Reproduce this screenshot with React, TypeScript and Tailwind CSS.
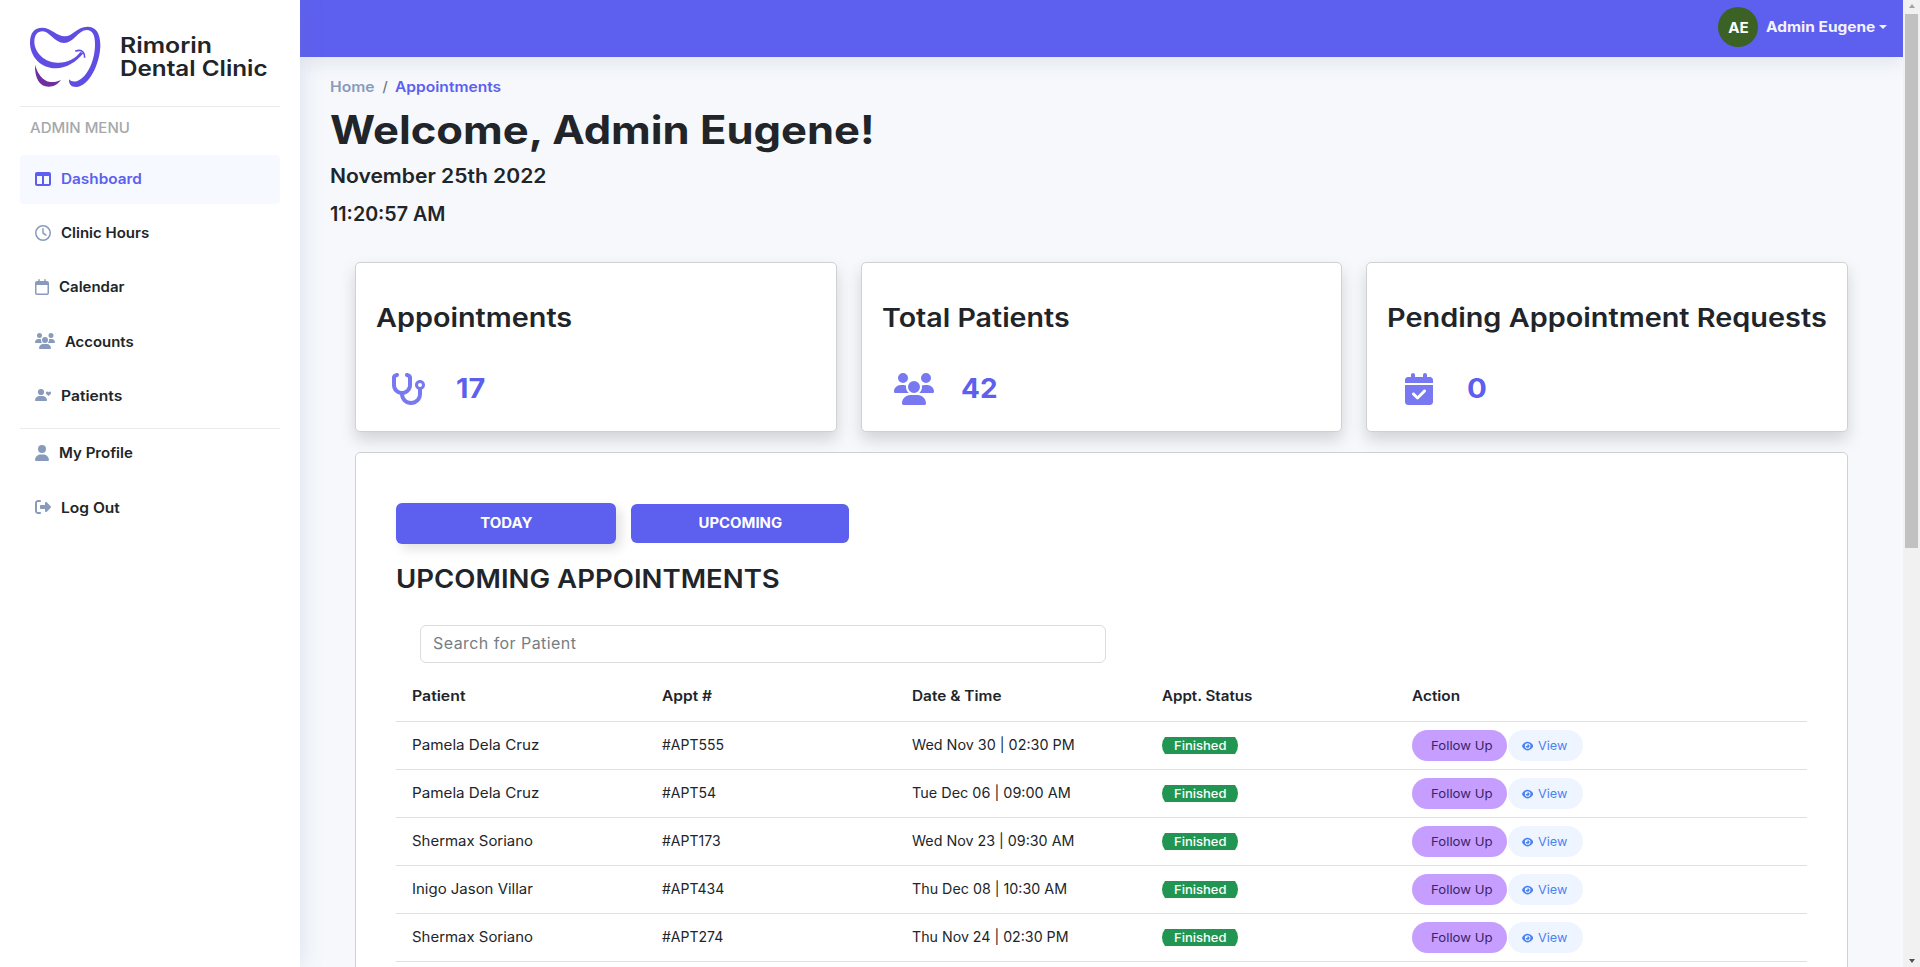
import type { ReactNode } from "react";
import {
  FaCalendarCheck,
  FaEye,
  FaRegCalendar,
  FaRegClock,
  FaRightFromBracket,
  FaStethoscope,
  FaTableColumns,
  FaUser,
  FaUsers,
} from "react-icons/fa6";

/* Single-line text with slightly widened letterforms. */
function Wide({ w, children }: { w: string; children: ReactNode }) {
  return <span className={`inline-block origin-left whitespace-nowrap ${w}`}>{children}</span>;
}

function ToothLogo() {
  return (
    <svg viewBox="0 0 300 252" className="h-[84px] w-[100px] shrink-0">
      <path
        fill="#604ee2"
        d="M190 112C170 137 140 157 108 157C60 156 30 120 30 80C30 50 44 35 66 35C92 35 112 61 134 61C158 61 172 32 202 32C228 32 241 52 241 88C241 140 208 213 168 213C154 213 146 206 147 190C153 197 162 198 172 195C205 182 225 130 225 85C225 58 218 42 200 42C176 42 160 81 132 81C104 81 88 46 68 46C52 46 43 58 43 78C44 112 76 140 112 140C142 141 166 128 181 108Z"
      />
      <path d="M166 106Q181 99 189 108Q194 114 194 125" fill="none" stroke="#604ee2" strokeWidth="5" />
      <path
        fill="#702da0"
        d="M45 146C52 170 66 195 92 198C104 199 114 196 123 192C113 205 102 212 86 212C58 212 44 185 45 146Z"
      />
    </svg>
  );
}

function UserHeart() {
  return (
    <svg viewBox="0 0 16 16" fill="currentColor" className="h-4 w-4">
      <circle cx="6" cy="5" r="3.1" />
      <path d="M4.600 9h2.800C10 9 12 10.900 12 13.300c0 .4-.3.7-.7.7H.7c-.4 0-.7-.3-.7-.7C0 10.900 2 9 4.600 9Z" />
      <path d="M13.500 9.100L11.300 6.900C10.500 5.900 11.100 4.500 12.200 4.500c.6 0 1 .3 1.300.8.300-.5.700-.8 1.300-.8C15.900 4.500 16.500 5.900 15.700 6.900Z" />
    </svg>
  );
}

function NavItem({ icon, label, w, active = false }: { icon: ReactNode; label: string; w: string; active?: boolean }) {
  return (
    <a
      className={`mb-[5.200px] flex h-[49px] items-center gap-[10px] rounded px-[15px] pb-[2px] text-[14px] font-semibold ${
        active ? "bg-[#f6f9ff] text-[#5d5fef]" : "text-[#212529]"
      }`}
    >
      <span className={active ? "text-[#5d5fef]" : "text-[#899bbd]"}>{icon}</span>
      <Wide w={w}>{label}</Wide>
    </a>
  );
}

function Sidebar() {
  return (
    <aside className="relative z-10 h-full w-[300px] shrink-0 bg-white px-5 shadow-[0_0_22px_rgba(110,130,165,0.210)]">
      <div className="flex h-[106px] items-center">
        <div className="mt-[10px]">
          <ToothLogo />
        </div>
        <div className="mt-2 text-[21.500px] leading-[23px] font-semibold text-[#212529]">
          <div>
            <Wide w="scale-x-[1.155]">Rimorin</Wide>
          </div>
          <div>
            <Wide w="scale-x-[1.127]">Dental Clinic</Wide>
          </div>
        </div>
      </div>
      <div className="h-px bg-[#ebebec]" />
      <div className="flex h-[41px] items-center px-[10px] pb-px text-[14px] font-medium text-[#a5a8ab]">
        <Wide w="scale-x-[1.073]">ADMIN MENU</Wide>
      </div>
      <nav className="mt-[7px]">
        <NavItem active label="Dashboard" w="scale-x-[1.095]" icon={<FaTableColumns className="h-4 w-4" />} />
        <NavItem label="Clinic Hours" w="scale-x-[1.071]" icon={<FaRegClock className="h-4 w-4" />} />
        <NavItem label="Calendar" w="scale-x-[1.071]" icon={<FaRegCalendar className="h-4 w-3.5" />} />
        <NavItem label="Accounts" w="scale-x-[1.065]" icon={<FaUsers className="h-4 w-5" />} />
        <NavItem label="Patients" w="scale-x-[1.115]" icon={<UserHeart />} />
      </nav>
      <div className="mt-[6.800px] h-px bg-[#ebebec]" />
      <nav className="pt-[0.800px]">
        <NavItem label="My Profile" w="scale-x-[1.075]" icon={<FaUser className="h-4 w-3.5" />} />
        <NavItem label="Log Out" w="scale-x-[1.110]" icon={<FaRightFromBracket className="h-4 w-4" />} />
      </nav>
    </aside>
  );
}

function TopBar() {
  return (
    <header className="flex h-[57px] shrink-0 justify-end bg-[#5d5fef] pt-[7px] pr-4 text-white shadow-[0_8px_16px_rgba(136,152,170,0.150)]">
      <div className="flex h-10 items-center">
        <div className="flex h-10 w-10 items-center justify-center rounded-full bg-[#3c6124] text-[14px] font-bold">
          <span className="scale-x-[1.080]">AE</span>
        </div>
        <span className="ml-[7.500px] w-[113.500px] pb-px text-[14px] font-bold text-[#f3f3ff]">
          <Wide w="scale-x-[1.104]">Admin Eugene</Wide>
        </span>
        <span className="mb-px h-0 w-0 border-x-4 border-t-4 border-x-transparent border-t-[#f3f3ff]" />
      </div>
    </header>
  );
}

function StatCard({ title, titleW, body, bodyClass }: { title: string; titleW: string; body: ReactNode; bodyClass: string }) {
  return (
    <section className="h-[170px] min-w-0 flex-1 rounded-[5px] border border-[#d0d1d4] bg-white shadow-[0_8px_16px_rgba(0,0,0,0.150)]">
      <h2 className="mt-[35px] pl-5 text-[26px] leading-10 font-semibold text-[#212529]">
        <Wide w={titleW}>{title}</Wide>
      </h2>
      <div className={`mt-[31px] flex h-10 items-center text-[27px] font-bold text-[#5d5fef] ${bodyClass}`}>{body}</div>
    </section>
  );
}

type Row = { patient: string; nameW: string; appt: string; time: string; timeW: string };

const rows: Row[] = [
  { patient: "Pamela Dela Cruz", nameW: "scale-x-[1.085]", appt: "#APT555", time: "Wed Nov 30 | 02:30 PM", timeW: "scale-x-[1.025]" },
  { patient: "Pamela Dela Cruz", nameW: "scale-x-[1.085]", appt: "#APT54", time: "Tue Dec 06 | 09:00 AM", timeW: "scale-x-[1.030]" },
  { patient: "Shermax Soriano", nameW: "scale-x-[1.067]", appt: "#APT173", time: "Wed Nov 23 | 09:30 AM", timeW: "scale-x-[1.020]" },
  { patient: "Inigo Jason Villar", nameW: "scale-x-[1.068]", appt: "#APT434", time: "Thu Dec 08 | 10:30 AM", timeW: "scale-x-[1.020]" },
  { patient: "Shermax Soriano", nameW: "scale-x-[1.067]", appt: "#APT274", time: "Thu Nov 24 | 02:30 PM", timeW: "scale-x-[1.014]" },
];

function StatusBadge() {
  return (
    <span className="flex h-[17px] w-[76px] items-center overflow-hidden">
      <span className="flex h-[27px] w-full shrink-0 items-center justify-center rounded-full bg-[#219653] text-[12px] font-medium text-white">
        <span className="scale-x-[1.080]">Finished</span>
      </span>
    </span>
  );
}

function TableRow({ row }: { row: Row }) {
  return (
    <div className="grid h-12 grid-cols-[250px_250px_250px_250px_1fr] items-center border-b border-[#dee0e2] pl-4 text-[14px] text-[#212529]">
      <span className="pb-[2px]">
        <Wide w={row.nameW}>{row.patient}</Wide>
      </span>
      <span className="pb-[2px]">{row.appt}</span>
      <span className="pb-[2px]">
        <Wide w={row.timeW}>{row.time}</Wide>
      </span>
      <StatusBadge />
      <div className="flex items-center text-[12px]">
        <button className="flex h-[31px] w-[95px] items-center rounded-full bg-[#c69eff] pl-[19px] text-[#3b2466]">
          <Wide w="scale-x-[1.100]">Follow Up</Wide>
        </button>
        <button className="ml-[0.500px] flex h-[31px] w-[75.500px] items-center gap-[4.500px] rounded-full bg-[#eff5ff] pl-[14.500px] text-[#4a82f3]">
          <FaEye className="h-[10px] w-[11.250px]" />
          <Wide w="scale-x-[1.054]">View</Wide>
        </button>
      </div>
    </div>
  );
}

function AppointmentsPanel() {
  return (
    <section className="mt-5 h-[700px] rounded-[5px] border border-[#d0d1d4] bg-white px-10 pt-[50px]">
      <div className="flex h-[41px] items-center gap-[15px] text-[14px] font-bold text-white">
        <button className="flex h-[41px] w-[220px] items-center justify-center rounded-[6px] bg-[#5d5fef] pb-[2px] shadow-[5px_5px_12px_rgba(0,0,0,0.120)]">
          <span className="scale-x-[1.070]">TODAY</span>
        </button>
        <button className="flex h-[39px] w-[218px] items-center justify-center rounded-[6px] bg-[#5d5fef] pb-[2px]">
          <span className="scale-x-[1.063]">UPCOMING</span>
        </button>
      </div>
      <h2 className="mt-[15px] text-[26px] leading-10 font-semibold text-[#212529]">
        <Wide w="scale-x-[1.060]">UPCOMING APPOINTMENTS</Wide>
      </h2>
      <input
        placeholder="Search for Patient"
        className="mt-[26px] ml-6 block h-[38px] w-[686px] rounded-[6px] border border-[#dadce0] px-3 pb-[2px] text-[16px] tracking-[0.440px] placeholder:text-[#757d85]"
      />
      <div className="mt-[10px] grid h-[49px] grid-cols-[250px_250px_250px_250px_1fr] items-center border-b border-[#dee0e2] pb-[3px] pl-4 text-[14px] font-semibold text-[#212529]">
        <Wide w="scale-x-[1.130]">Patient</Wide>
        <Wide w="scale-x-[1.109]">Appt #</Wide>
        <Wide w="scale-x-[1.100]">Date &amp; Time</Wide>
        <Wide w="scale-x-[1.080]">Appt. Status</Wide>
        <Wide w="scale-x-[1.097]">Action</Wide>
      </div>
      {rows.map((row) => (
        <TableRow key={row.appt} row={row} />
      ))}
    </section>
  );
}

function Scrollbar() {
  return (
    <div className="flex h-full w-[17px] shrink-0 flex-col items-center justify-between bg-[#f1f1f1]">
      <div className="flex flex-col items-center">
        <div className="flex h-[14px] items-start pt-1">
          <span className="h-0 w-0 border-x-[3.500px] border-b-4 border-x-transparent border-b-[#a3a3a3]" />
        </div>
        <div className="h-[534px] w-[13px] bg-[#c1c1c1]" />
      </div>
      <span className="mb-1 h-0 w-0 border-x-[3.500px] border-t-4 border-x-transparent border-t-[#505050]" />
    </div>
  );
}

export default function App() {
  return (
    <div className="flex h-[967px] w-[1920px] overflow-hidden bg-[#f6f8fc] font-[Inter,sans-serif]">
      <Sidebar />
      <div className="flex h-full w-[1603px] flex-col overflow-hidden">
        <TopBar />
        <main className="px-[30px] text-[#212529]">
          <div className="mt-[19px] flex h-5 items-center text-[14px] font-semibold">
            <span className="w-[45px] text-[#899bbd]">
              <Wide w="scale-x-[1.120]">Home</Wide>
            </span>
            <span className="w-[20px] text-center font-medium text-[#6c757d]">/</span>
            <span className="text-[#5d5fef]">
              <Wide w="scale-x-[1.113]">Appointments</Wide>
            </span>
          </div>
          <h1 className="mt-[10px] text-[39px] leading-[48px] font-bold">
            <Wide w="scale-x-[1.116]">Welcome, Admin Eugene!</Wide>
          </h1>
          <div className="mt-[10px] text-[19.500px] leading-6 font-semibold">
            <Wide w="scale-x-[1.080]">November 25th 2022</Wide>
          </div>
          <div className="mt-[14px] text-[19.500px] leading-6 font-semibold">
            <Wide w="scale-x-[1.008]">11:20:57 AM</Wide>
          </div>
          <div className="mt-9 px-[25px]">
            <div className="flex gap-6">
              <StatCard
                title="Appointments"
                titleW="scale-x-[1.108]"
                bodyClass="pl-[34px]"
                body={
                  <>
                    <FaStethoscope className="mr-[29.500px] h-8 w-9 text-[#7879f1]" />
                    <Wide w="scale-x-[1.070]">17</Wide>
                  </>
                }
              />
              <StatCard
                title="Total Patients"
                titleW="scale-x-[1.100]"
                bodyClass="pl-8"
                body={
                  <>
                    <FaUsers className="mr-[27.500px] h-8 w-10 text-[#7879f1]" />
                    <Wide w="scale-x-[1.035]">42</Wide>
                  </>
                }
              />
              <StatCard
                title="Pending Appointment Requests"
                titleW="scale-x-[1.110]"
                bodyClass="pl-[38px]"
                body={
                  <>
                    <FaCalendarCheck className="mr-[34px] h-8 w-7 text-[#7879f1]" />
                    <Wide w="scale-x-[1.090]">0</Wide>
                  </>
                }
              />
            </div>
            <AppointmentsPanel />
          </div>
        </main>
      </div>
      <Scrollbar />
    </div>
  );
}
